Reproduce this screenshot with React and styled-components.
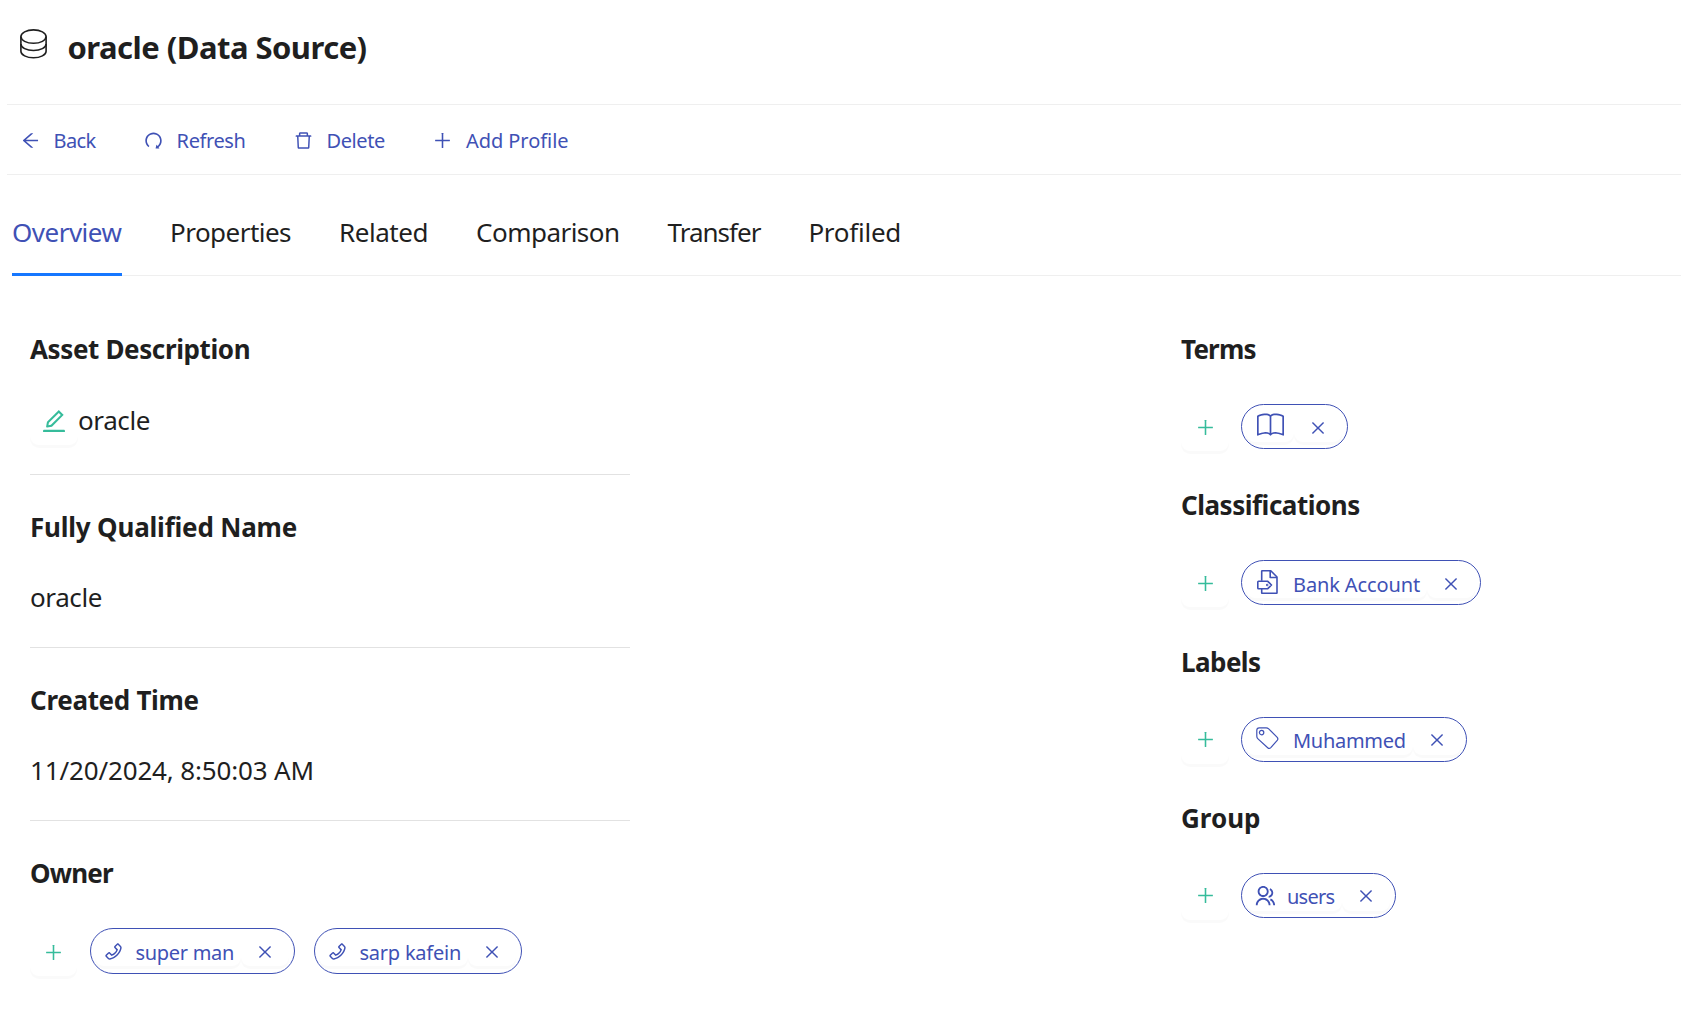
import React from "react";
import styled, { createGlobalStyle, css } from "styled-components";
import {
  AiOutlineArrowLeft,
  AiOutlineRedo,
  AiOutlineDelete,
  AiOutlinePlus,
  AiOutlineEdit,
  AiOutlinePhone,
  AiOutlineClose,
} from "react-icons/ai";
import { BsBook } from "react-icons/bs";
import { RiGroupLine } from "react-icons/ri";

const color = {
  text: "#1f1f1f",
  primary: "#3f51b5",
  active: "#1677ff",
  accent: "#36bc9b",
  line: "#efefef",
  divider: "#e2e2e2",
};

const GlobalStyle = createGlobalStyle`
  * { box-sizing: border-box; }
  body {
    margin: 0;
    background: #fff;
    color: ${color.text};
    font-family: "Noto Sans", "Open Sans", sans-serif;
  }
  svg { display: block; flex: none; }
  button { font-family: inherit; border: 0; background: none; padding: 0; margin: 0; cursor: pointer; }
`;

const tracking = css`
  letter-spacing: ${(p) => p.$track || 0}px;
  white-space: nowrap;
`;

const Page = styled.div`
  height: 1012px;
  padding-left: 7px;
  overflow: hidden;
`;

const Header = styled.header`
  display: flex;
  height: 105px;
  padding: 23px 0 0 13px;
  border-bottom: 1px solid ${color.line};
`;

const Title = styled.h1`
  margin: 0 0 0 20.5px;
  font-size: 31px;
  font-weight: 700;
  line-height: 48px;
  ${tracking}
`;

const HeaderIcon = styled.div`
  padding-top: 6px;
`;

const Toolbar = styled.nav`
  display: flex;
  gap: 47.5px;
  height: 70px;
  padding: 1px 0 0 13px;
  border-bottom: 1px solid ${color.line};
`;

const ToolButton = styled.button`
  display: flex;
  align-items: center;
  gap: 12.5px;
  color: ${color.primary};
  font-size: 20px;
  line-height: 30px;
  ${tracking}
  span { padding-top: 2px; }
`;

const Tabs = styled.div`
  display: flex;
  gap: 48px;
  height: 101px;
  margin-left: 5px;
  border-bottom: 1px solid ${color.line};
`;

const Tab = styled.button`
  height: 101px;
  min-width: ${(p) => (p.$active ? "110px" : "0")};
  padding-top: 16px;
  border-bottom: 3px solid ${(p) => (p.$active ? color.active : "transparent")};
  color: ${(p) => (p.$active ? color.primary : color.text)};
  font-size: 26px;
  line-height: 40px;
  text-align: left;
  ${tracking}
`;

const Content = styled.main`
  display: flex;
  justify-content: space-between;
  padding: 21px 0 0 23px;
`;

const Details = styled.div`
  width: 600px;
`;

const Aside = styled.aside`
  width: 500px;
  padding-top: 32px;
`;

const Section = styled.section`
  padding: 32px 0 ${(p) => p.$bottom ?? 30}px;
  border-bottom: ${(p) => (p.$last ? "0" : `1px solid ${color.divider}`)};
`;

const Heading = styled.h2`
  margin: 0;
  font-size: 26px;
  font-weight: 700;
  line-height: 40px;
  ${tracking}
`;

const Value = styled.div`
  margin-top: ${(p) => p.$top ?? 30}px;
  display: flex;
  align-items: flex-start;
  font-size: 26px;
  line-height: 40px;
  ${tracking}
`;

const ValueText = styled.span`
  padding-top: 3px;
`;

const IconButton = styled.button`
  display: flex;
  align-items: center;
  justify-content: center;
  width: ${(p) => p.$width || 48}px;
  height: 48px;
  flex: none;
  border-radius: 9px;
  color: ${color.accent};
  box-shadow: 0 3px 0 rgba(0, 0, 0, 0.02);
`;

const Group = styled.section`
  height: 156.3px;
`;

const ChipRow = styled.div`
  display: flex;
  align-items: flex-start;
  margin-top: ${(p) => p.$top}px;
`;

const Chips = styled.div`
  display: flex;
  gap: 19px;
  margin-left: ${(p) => p.$left}px;
  padding-top: ${(p) => p.$top || 0}px;
`;

const Chip = styled.div`
  display: flex;
  width: ${(p) => p.$width}px;
  height: ${(p) => p.$height || 45}px;
  padding: 0 5px 0 4px;
  border: 1px solid ${color.primary};
  border-radius: 23px;
  overflow: hidden;
  color: ${color.primary};
`;

const ChipPart = styled.button`
  display: flex;
  align-items: center;
  height: 37px;
  padding-top: 8px;
  border-radius: 9px;
  color: inherit;
  box-shadow: 0 3px 0 rgba(0, 0, 0, 0.02);
`;

const ChipMain = styled(ChipPart)`
  flex: 1;
  padding-left: 8px;
`;

const ChipClose = styled(ChipPart)`
  width: 48px;
  justify-content: center;
`;

const ChipIcon = styled.span`
  width: ${(p) => p.$slot}px;
  padding-left: ${(p) => p.$left || 0}px;
  margin-top: ${(p) => p.$lift || 0}px;
  flex: none;
`;

const ChipText = styled.span`
  padding-top: 2px;
  font-size: 20px;
  line-height: 30px;
  ${tracking}
`;

const DatabaseIcon = () => (
  <svg width="27" height="30" viewBox="0 0 27 30" fill="none" stroke="currentColor" strokeWidth="1.6">
    <ellipse cx="13.5" cy="7.6" rx="12.6" ry="6.7" />
    <path d="M.9 7.6v14.6c0 3.6 5.7 6.6 12.6 6.6s12.6-3 12.6-6.6V7.6" />
    <path d="M.9 14.9c0 3.7 5.7 6.6 12.6 6.6s12.6-2.9 12.6-6.6" />
  </svg>
);

const FileTagIcon = () => (
  <svg width="22" height="24" viewBox="0 0 22 24" fill="none" stroke="currentColor" strokeWidth="1.6" strokeLinejoin="round">
    <path d="M4.7 10.8V1.3c0-.3.2-.5.5-.5h8.6L20 7v15.8c0 .3-.2.5-.5.5H5.2c-.3 0-.5-.2-.5-.5v-3.7" />
    <path d="M13.2.9v6.6H20" />
    <path d="M1.5 11.2h9l4 3.8-4 3.8h-9c-.4 0-.7-.3-.7-.7v-6.2c0-.4.3-.7.7-.7z" />
    <circle cx="10.2" cy="15" r=".4" />
  </svg>
);

const LabelIcon = () => (
  <svg width="23" height="23" viewBox="0 0 23 23" fill="none" stroke="currentColor" strokeWidth="1.2" strokeLinejoin="round">
    <path d="M3.2.8h6.9c1 0 1.9.4 2.6 1.1l8.3 8.3c1 1 1 2.4 0 3.4l-6.2 7c-.9.9-2.2.9-3.1.1L2 11.9C1.200 11.200.8 10.300.8 9.300V3.200C.8 1.900 1.900.8 3.200.8z" />
    <circle cx="5.6" cy="5.6" r="2.200" />
  </svg>
);

const chipIcons = {
  phone: { node: <AiOutlinePhone size={21} />, slot: 32.5 },
  book: { node: <BsBook size={27} />, slot: 33, left: 3, lift: -4 },
  file: { node: <FileTagIcon />, slot: 39, left: 3, lift: -4 },
  tag: { node: <LabelIcon />, slot: 39, left: 2, lift: -3 },
  users: { node: <RiGroupLine size={22} />, slot: 33, left: 0 },
};

const tools = [
  { label: "Back", Icon: AiOutlineArrowLeft, track: -0.6 },
  { label: "Refresh", Icon: AiOutlineRedo, track: -0.4 },
  { label: "Delete", Icon: AiOutlineDelete, track: -0.4 },
  { label: "Add Profile", Icon: AiOutlinePlus, track: -0.05 },
];

const tabs = [
  { label: "Overview", track: -0.5, active: true },
  { label: "Properties", track: -0.53 },
  { label: "Related", track: -0.45 },
  { label: "Comparison", track: -0.52 },
  { label: "Transfer", track: -1 },
  { label: "Profiled", track: -0.25 },
];

const owners = [
  { label: "super man", icon: "phone", width: 205, height: 46, track: -0.3 },
  { label: "sarp kafein", icon: "phone", width: 208, height: 46, track: -0.23 },
];

const groups = [
  { title: "Terms", track: -0.8, chip: { icon: "book", width: 107 } },
  { title: "Classifications", track: -0.48, chip: { label: "Bank Account", icon: "file", width: 240, track: -0.12 } },
  { title: "Labels", track: -0.55, chip: { label: "Muhammed", icon: "tag", width: 226, track: -0.3 } },
  { title: "Group", track: 0, chip: { label: "users", icon: "users", width: 155, track: -0.75 } },
];

function AssetChip({ label, icon, width, height, track }) {
  const { node, slot, left, lift } = chipIcons[icon];
  return (
    <Chip $width={width} $height={height}>
      <ChipMain>
        <ChipIcon $slot={slot} $left={left} $lift={lift}>{node}</ChipIcon>
        {label && <ChipText $track={track}>{label}</ChipText>}
      </ChipMain>
      <ChipClose aria-label="Remove">
        <AiOutlineClose size={18} />
      </ChipClose>
    </Chip>
  );
}

export default function App() {
  return (
    <Page>
      <GlobalStyle />
      <Header>
        <HeaderIcon><DatabaseIcon /></HeaderIcon>
        <Title $track={-0.53}>oracle (Data Source)</Title>
      </Header>
      <Toolbar>
        {tools.map(({ label, Icon, track }) => (
          <ToolButton key={label} $track={track}>
            <Icon size={21} />
            <span>{label}</span>
          </ToolButton>
        ))}
      </Toolbar>
      <Tabs>
        {tabs.map(({ label, track, active }) => (
          <Tab key={label} $track={track} $active={active}>{label}</Tab>
        ))}
      </Tabs>
      <Content>
        <Details>
          <Section $bottom={29}>
            <Heading $track={-0.38}>Asset Description</Heading>
            <Value $top={28} $track={-0.4}>
              <IconButton aria-label="Edit"><AiOutlineEdit size={28} /></IconButton>
              <ValueText>oracle</ValueText>
            </Value>
          </Section>
          <Section>
            <Heading $track={-0.2}>Fully Qualified Name</Heading>
            <Value $track={-0.4}>oracle</Value>
          </Section>
          <Section>
            <Heading $track={-0.31}>Created Time</Heading>
            <Value $track={-0.15}>11/20/2024, 8:50:03 AM</Value>
          </Section>
          <Section $last>
            <Heading $track={-0.8}>Owner</Heading>
            <ChipRow $top={35}>
              <IconButton $width={47} aria-label="Add"><AiOutlinePlus size={21} /></IconButton>
              <Chips $left={13}>
                {owners.map((o) => <AssetChip key={o.label} {...o} />)}
              </Chips>
            </ChipRow>
          </Section>
        </Details>
        <Aside>
          {groups.map(({ title, track, chip }) => (
            <Group key={title}>
              <Heading $track={track}>{title}</Heading>
              <ChipRow $top={34}>
                <IconButton aria-label="Add"><AiOutlinePlus size={21} /></IconButton>
                <Chips $left={12} $top={1}><AssetChip {...chip} /></Chips>
              </ChipRow>
            </Group>
          ))}
        </Aside>
      </Content>
    </Page>
  );
}
